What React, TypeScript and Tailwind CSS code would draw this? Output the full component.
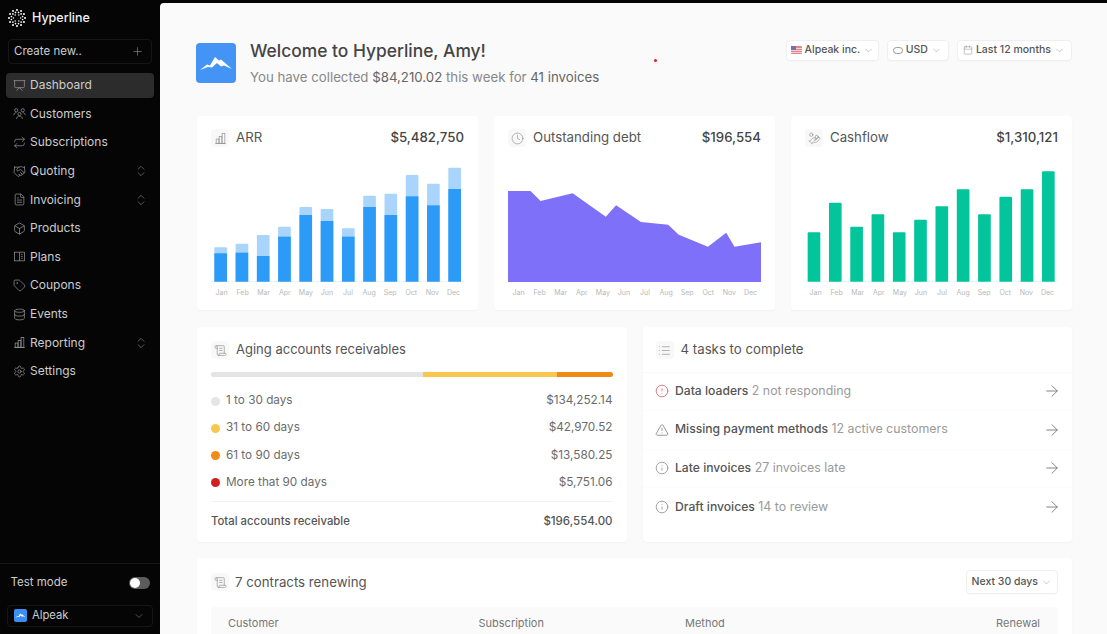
import type { ReactNode } from "react";
import {
  ArrowRight,
  Box,
  Calendar,
  ChevronDown,
  ChevronsUpDown,
  CircleAlert,
  Clock,
  Database,
  FileText,
  HandCoins,
  Handshake,
  Info,
  List,
  Plus,
  Presentation,
  Repeat,
  ScrollText,
  Settings,
  Tag,
  TriangleAlert,
} from "lucide-react";

type IconProps = { size?: number; strokeWidth?: number; className?: string };

function BarsIcon({ size = 13, strokeWidth = 1.3, className }: IconProps) {
  return (
    <svg width={size} height={size} viewBox="0 0 24 24" fill="none" stroke="currentColor" strokeWidth={strokeWidth} className={className}>
      <path d="M2 21h20" />
      <rect x="4" y="13" width="5" height="8" />
      <rect x="9.5" y="8" width="5" height="13" />
      <rect x="15" y="3" width="5" height="18" />
    </svg>
  );
}

function PeopleIcon({ size = 13, strokeWidth = 1.3, className }: IconProps) {
  return (
    <svg width={size} height={size} viewBox="0 0 24 24" fill="none" stroke="currentColor" strokeWidth={strokeWidth} className={className}>
      <circle cx="6" cy="6" r="3" />
      <circle cx="18" cy="6" r="3" />
      <circle cx="12" cy="13" r="3" />
      <path d="M1.5 15c0-3 2-4.5 4.5-4.5M22.5 15c0-3-2-4.5-4.5-4.5M6.5 22c0-3 2.5-5 5.5-5s5.500 2 5.500 5" />
    </svg>
  );
}

function PlansIcon({ size = 13, strokeWidth = 1.3, className }: IconProps) {
  return (
    <svg width={size} height={size} viewBox="0 0 24 24" fill="none" stroke="currentColor" strokeWidth={strokeWidth} className={className}>
      <rect x="3" y="4" width="18" height="16" />
      <path d="M12 4v16M15 8.500h3M15 12h3M15 15.500h3" />
    </svg>
  );
}

const months = ["Jan", "Feb", "Mar", "Apr", "May", "Jun", "Jul", "Aug", "Sep", "Oct", "Nov", "Dec"];

const navItems = [
  { label: "Dashboard", icon: Presentation, active: true },
  { label: "Customers", icon: PeopleIcon },
  { label: "Subscriptions", icon: Repeat },
  { label: "Quoting", icon: Handshake, expand: true },
  { label: "Invoicing", icon: FileText, expand: true },
  { label: "Products", icon: Box },
  { label: "Plans", icon: PlansIcon },
  { label: "Coupons", icon: Tag },
  { label: "Events", icon: Database },
  { label: "Reporting", icon: BarsIcon, expand: true },
  { label: "Settings", icon: Settings },
];

// top of the light part and top of the dark part, in chart units (base is 367)
const arrBars = [
  [262, 280],
  [251, 278],
  [225, 288],
  [200, 230],
  [141, 165],
  [147, 183],
  [205, 230],
  [107, 141],
  [101, 165],
  [45, 109],
  [71, 136],
  [23, 87],
];
const cashBars = [217, 128, 200, 163, 217, 179, 139, 88, 163, 110, 88, 34];

const aging = [
  { label: "1 to 30 days", value: "$134,252.14", dot: "bg-[#e5e5e5]" },
  { label: "31 to 60 days", value: "$42,970.52", dot: "bg-[#f8c84e]" },
  { label: "61 to 90 days", value: "$13,580.25", dot: "bg-[#f08c16]" },
  { label: "More that 90 days", value: "$5,751.06", dot: "bg-[#d31f1f]" },
];

const tasks = [
  { title: "Data loaders", note: "2 not responding", icon: CircleAlert, color: "text-[#d9575c]" },
  { title: "Missing payment methods", note: "12 active customers", icon: TriangleAlert, color: "text-[#777777]" },
  { title: "Late invoices", note: "27 invoices late", icon: Info, color: "text-[#888888]" },
  { title: "Draft invoices", note: "14 to review", icon: Info, color: "text-[#888888]" },
];

function HyperlineLogo() {
  const rings = [
    { count: 12, r: 8, size: 1, shift: 0 },
    { count: 12, r: 5.8, size: 0.85, shift: Math.PI / 12 },
    { count: 6, r: 3.6, size: 0.75, shift: 0 },
  ];
  return (
    <svg width="18" height="18" viewBox="0 0 18 18" fill="white">
      {rings.map((ring) =>
        Array.from({ length: ring.count }, (_, i) => {
          const a = (i * 2 * Math.PI) / ring.count + ring.shift;
          return (
            <circle key={`${ring.r}-${i}`} cx={9 + Math.cos(a) * ring.r} cy={9 + Math.sin(a) * ring.r} r={ring.size} />
          );
        }),
      )}
    </svg>
  );
}

function Mountain({ size }: { size: number }) {
  return (
    <svg width={size} height={size} viewBox="0 0 40 40">
      <path d="M4 27 L11 21.500 L14 22.500 L19 14 L23 17.500 L25 16.500 L36 26 L28 22.500 L25 23.500 L21 20 L16 24.500 L12 24 Z" fill="white" />
    </svg>
  );
}

function Sidebar() {
  return (
    <aside className="flex h-full w-[160px] shrink-0 flex-col bg-[#050505] pt-[3px] text-[#cccccc]">
      <div className="flex h-[30px] items-center gap-[6px] pl-[8px]">
        <HyperlineLogo />
        <span className="text-[12.5px] font-medium text-[#f2f2f2]">Hyperline</span>
      </div>
      <div className="mx-[8px] mt-[6px] flex h-[25px] items-center justify-between rounded border border-[#161616] pl-[5px] pr-[7px] text-[11.5px]">
        Create new..
        <Plus size={13} strokeWidth={1.2} className="text-[#8a8a8a]" />
      </div>
      <nav className="mt-[7px] flex flex-col">
        {navItems.map((item) => {
          const Icon = item.icon;
          return (
            <div key={item.label} className="flex h-[28.6px] items-center">
              <div
                className={`mx-[6px] flex h-[25.6px] flex-1 items-center rounded pl-[7px] pr-[6px] text-[12px] ${
                  item.active ? "bg-[#2c2c2c]" : ""
                }`}
              >
                <Icon size={13} strokeWidth={1.3} className="text-[#9a9a9a]" />
                <span className="ml-[4px] flex-1">{item.label}</span>
                {item.expand && <ChevronsUpDown size={14} strokeWidth={1.1} className="text-[#8a8a8a]" />}
              </div>
            </div>
          );
        })}
      </nav>
      <div className="mt-auto border-t border-[#161616] pb-[7.5px]">
        <div className="flex h-[38px] items-center justify-between pl-[10.5px] pr-[10px] text-[11.5px]">
          Test mode
          <span className="flex h-[12px] w-[21px] items-center rounded-full bg-[#5c5c5c] pl-[1px]">
            <span className="h-[10px] w-[10px] rounded-full bg-white" />
          </span>
        </div>
        <div className="mx-[7px] mt-[3px] flex h-[22px] items-center rounded border border-[#161616] pl-[6px] pr-[7px] text-[11.25px]">
          <span className="flex h-[13px] w-[13px] items-center justify-center rounded-[2px] bg-[#3b8ff0]">
            <Mountain size={13} />
          </span>
          <span className="ml-[5px] flex-1">Alpeak</span>
          <ChevronDown size={12} strokeWidth={1.2} className="text-[#8a8a8a]" />
        </div>
      </div>
    </aside>
  );
}

function Pill({ children, className = "" }: { children: ReactNode; className?: string }) {
  return (
    <div
      className={`flex h-[21px] items-center gap-[3px] rounded border border-[#efefef] bg-white text-[10.5px] font-medium text-[#555555] shadow-[0_1px_1px_rgba(0,0,0,0.02)] ${className}`}
    >
      {children}
      <ChevronDown size={11} strokeWidth={1.2} className="text-[#999999]" />
    </div>
  );
}

function UsFlag() {
  return (
    <svg width="11" height="8" viewBox="0 0 11 8">
      <rect width="11" height="8" rx="1" fill="#e8838c" />
      <rect y="2" width="11" height="1" fill="#f3d3d6" />
      <rect y="4" width="11" height="1" fill="#f3d3d6" />
      <rect y="6" width="11" height="1" fill="#f3d3d6" />
      <rect width="5" height="4" fill="#6f75b0" />
    </svg>
  );
}

function IconBox({ children }: { children: ReactNode }) {
  return (
    <span className="flex h-[18px] w-[18px] shrink-0 items-center justify-center rounded bg-[#f8f8f8] text-[#8d8d8d]">
      {children}
    </span>
  );
}

function Card({ children, className = "" }: { children: ReactNode; className?: string }) {
  return <section className={`rounded bg-white shadow-[0_1px_2px_rgba(0,0,0,0.04)] ${className}`}>{children}</section>;
}

function ChartCard({
  title,
  value,
  icon,
  children,
}: {
  title: string;
  value: string;
  icon: ReactNode;
  children: ReactNode;
}) {
  return (
    <Card className="h-[194px] px-[14px] pt-[13px]">
      <div className="flex h-[18px] items-center text-[13.25px] text-[#555555]">
        <IconBox>{icon}</IconBox>
        <span className="ml-[7px] flex-1">{title}</span>
        <span className="font-medium text-[#444444]">{value}</span>
      </div>
      <div className="mt-[13px] h-[122.33px]">{children}</div>
      <div className="mt-[4px] grid grid-cols-12 text-center text-[7px] leading-[14px] text-[#b8b8b8]">
        {months.map((m) => (
          <span key={m}>{m}</span>
        ))}
      </div>
    </Card>
  );
}

function ArrChart() {
  return (
    <svg width="100%" height="100%" viewBox="62 150 760 367" preserveAspectRatio="none">
      {arrBars.map(([light, dark], i) => {
        const x = 72 + i * 63.9;
        return (
          <g key={i}>
            <rect x={x} y={150 + light} width="38" height={367 - light} rx="3" fill="#a9d4fb" />
            <rect x={x} y={150 + dark} width="38" height={367 - dark} fill="#2b9bf7" />
          </g>
        );
      })}
      <rect x="62" y="515" width="760" height="2" fill="#b9dcfa" />
    </svg>
  );
}

function DebtChart() {
  return (
    <svg width="100%" height="100%" viewBox="52 150 763 367" preserveAspectRatio="none">
      <polygon
        points="52,243 120,243 150,273 247,250 347,320 378,286 453,336 535,344 567,374 655,410 710,368 735,410 815,397 815,517 52,517"
        fill="#7f70fa"
      />
    </svg>
  );
}

function CashChart() {
  return (
    <svg width="100%" height="100%" viewBox="60 150 760 367" preserveAspectRatio="none">
      {cashBars.map((top, i) => (
        <rect key={i} x={68 + i * 64} y={150 + top} width="38" height={367 - top} rx="3" fill="#02c59b" />
      ))}
      <rect x="60" y="515" width="760" height="2" fill="#b5eedd" />
    </svg>
  );
}

function AgingCard() {
  return (
    <Card className="h-[215px] px-[14px] pt-[14px]">
      <div className="flex h-[18px] items-center text-[13px] text-[#555555]">
        <IconBox>
          <ScrollText size={13} strokeWidth={1.2} />
        </IconBox>
        <span className="ml-[7px]">Aging accounts receivables</span>
      </div>
      <div className="mt-[13px] flex h-[5px] overflow-hidden rounded-full">
        <div className="w-[212px] bg-[#e4e4e4]" />
        <div className="w-[134px] bg-[#f9c74f]" />
        <div className="flex-1 bg-[#ef8a17]" />
      </div>
      <div className="mt-[10.5px]">
        {aging.map((row) => (
          <div key={row.label} className="flex h-[27.2px] items-center text-[11.75px] text-[#6b6b6b]">
            <span className={`h-[9px] w-[9px] rounded-full ${row.dot}`} />
            <span className="ml-[6px] flex-1">{row.label}</span>
            <span>{row.value}</span>
          </div>
        ))}
      </div>
      <div className="mt-[5px] flex h-[39px] items-center justify-between border-t border-[#f1f1f1] text-[11.35px] font-medium text-[#555555]">
        <span>Total accounts receivable</span>
        <span className="text-[11.5px]">$196,554.00</span>
      </div>
    </Card>
  );
}

function TasksCard() {
  return (
    <Card className="h-[215px] pt-[14px]">
      <div className="mx-[13px] flex h-[18px] items-center text-[13.25px] text-[#555555]">
        <IconBox>
          <List size={13} strokeWidth={1.2} />
        </IconBox>
        <span className="ml-[7px]">4 tasks to complete</span>
      </div>
      <div className="mt-[12.5px] border-t border-[#f9f9f9]">
        {tasks.map((task) => {
          const Icon = task.icon;
          return (
            <div
              key={task.title}
              className="flex h-[38.5px] items-center border-b border-[#fcfcfc] pl-[12.5px] pr-[14px] last:border-b-0"
            >
              <Icon size={14} strokeWidth={1.3} className={task.color} />
              <p className="ml-[6px] flex-1 text-[12.4px] text-[#9a9a9a]">
                <span className="text-[12.15px] font-medium text-[#555555]">{task.title}</span> {task.note}
              </p>
              <ArrowRight size={18} strokeWidth={1.2} className="-mr-[3px] text-[#777777]" />
            </div>
          );
        })}
      </div>
    </Card>
  );
}

function ContractsCard() {
  return (
    <Card className="h-[100px] px-[14px] pt-[12px]">
      <div className="flex h-[24px] items-center text-[13.25px] text-[#555555]">
        <IconBox>
          <ScrollText size={13} strokeWidth={1.2} />
        </IconBox>
        <span className="ml-[6px] flex-1 pt-[1px]">7 contracts renewing</span>
        <Pill className="h-[24px] px-[5px] text-[#444444]">Next 30 days</Pill>
      </div>
      <div className="mt-[13px] grid h-[33px] grid-cols-[250.5px_206.5px_1fr_auto] items-center rounded bg-[#fafafa] pl-[17px] pr-[18px] text-[11px] text-[#777777]">
        <span>Customer</span>
        <span>Subscription</span>
        <span>Method</span>
        <span>Renewal</span>
      </div>
    </Card>
  );
}

export default function App() {
  return (
    <div className="flex h-screen w-full overflow-hidden bg-[#050505] font-['Inter',sans-serif]">
      <Sidebar />
      <main className="relative mt-[3px] flex-1 overflow-hidden rounded-tl bg-[#fafafa] pl-[37px] pr-[35px] pt-[36px]">
        <header className="flex h-[46px] items-start">
          <div className="-ml-px mt-[3.5px] flex h-[40px] w-[40px] items-center justify-center rounded bg-[#4394f4]">
            <Mountain size={40} />
          </div>
          <div className="ml-[14px]">
            <h1 className="text-[17.4px] font-medium leading-[24px] text-[#444444]">Welcome to Hyperline, Amy!</h1>
            <p className="mt-[5px] text-[13.25px] leading-[18px] text-[#888888]">
              You have collected <span className="text-[#666666]">$84,210.02</span> this week for{" "}
              <span className="text-[#666666]">41 invoices</span>
            </p>
          </div>
          <div className="ml-auto mt-[0.5px] flex gap-[8px]">
            <Pill className="pl-[4px] pr-[3.5px]">
              <UsFlag />
              Alpeak inc.
            </Pill>
            <Pill className="pl-[5px] pr-[6px]">
              <span className="h-[7px] w-[10px] rounded-full border border-[#999999]" />
              USD
            </Pill>
            <Pill className="pl-[5px] pr-[6px]">
              <Calendar size={10} strokeWidth={1.2} className="text-[#888888]" />
              Last 12 months
            </Pill>
          </div>
        </header>

        <div className="mt-[31px] grid grid-cols-3 gap-4">
          <ChartCard title="ARR" value="$5,482,750" icon={<BarsIcon size={13} strokeWidth={1.2} />}>
            <ArrChart />
          </ChartCard>
          <ChartCard title="Outstanding debt" value="$196,554" icon={<Clock size={13} strokeWidth={1.2} />}>
            <DebtChart />
          </ChartCard>
          <ChartCard title="Cashflow" value="$1,310,121" icon={<HandCoins size={13} strokeWidth={1.2} />}>
            <CashChart />
          </ChartCard>
        </div>

        <div className="mt-[17px] grid grid-cols-2 gap-4">
          <AgingCard />
          <TasksCard />
        </div>

        <div className="mt-4">
          <ContractsCard />
        </div>

        <span className="absolute left-[493.5px] top-[56px] h-[3px] w-[3px] rounded-full bg-[#e0202a]" />
      </main>
    </div>
  );
}
